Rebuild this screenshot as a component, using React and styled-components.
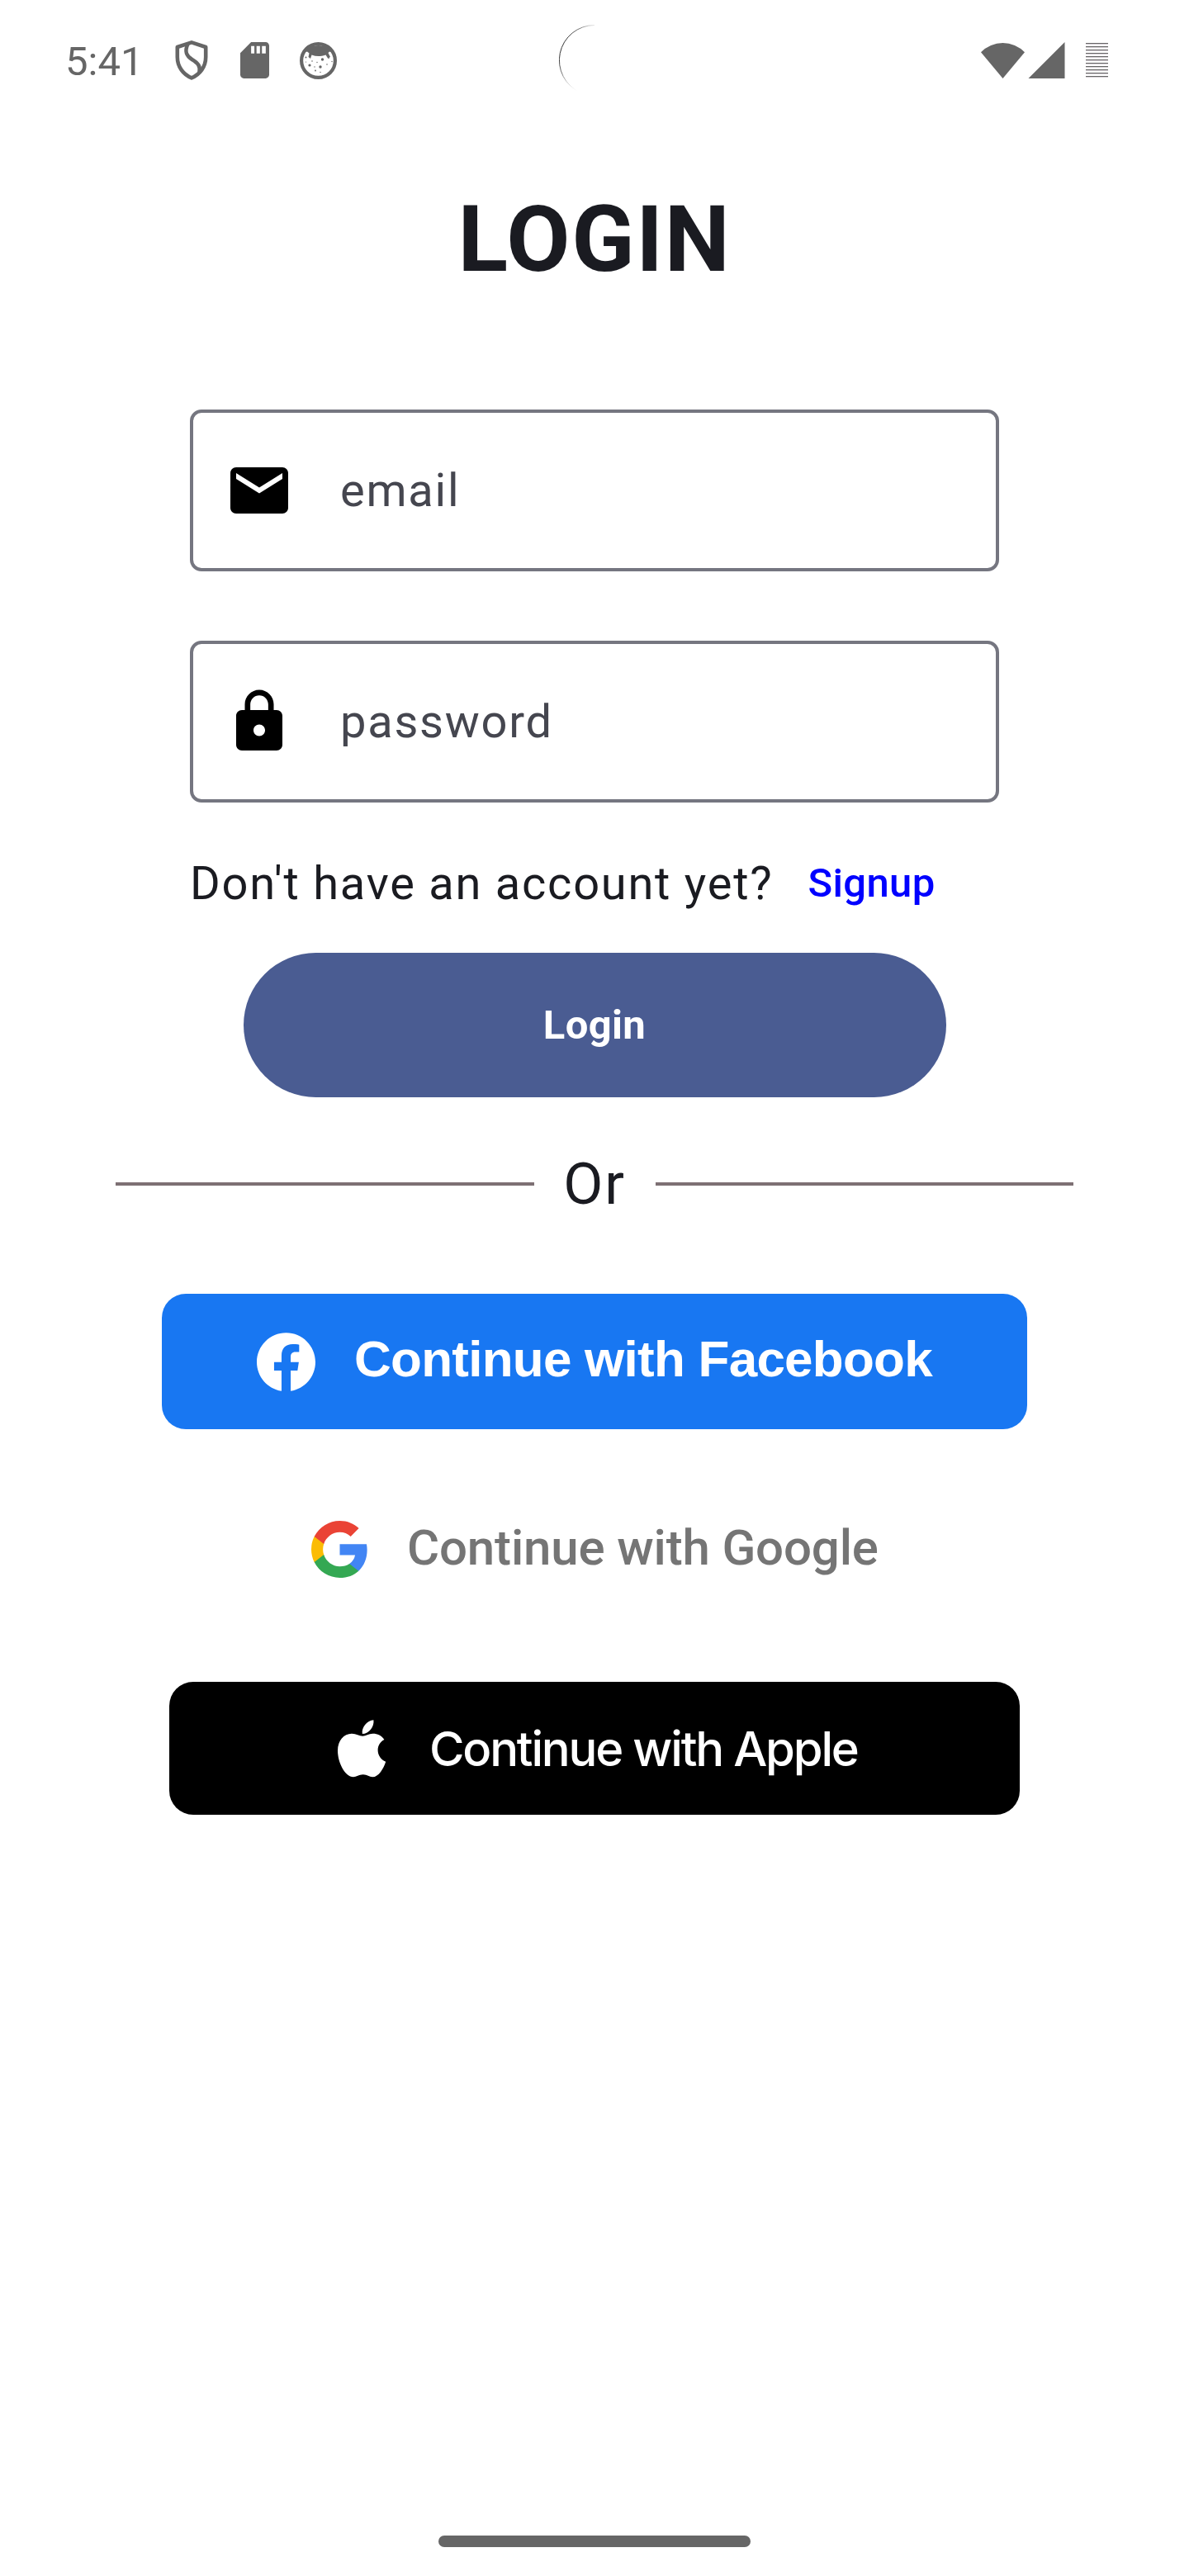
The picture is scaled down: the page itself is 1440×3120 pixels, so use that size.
import React from "react";
import styled, { createGlobalStyle } from "styled-components";

const GlobalStyle = createGlobalStyle`
  *, *::before, *::after { box-sizing: border-box; }
  body { margin: 0; background: #fff; }
  button { border: 0; padding: 0; margin: 0; }
`;

const Screen = styled.main`
  width: 1440px;
  height: 3120px;
  display: flex;
  flex-direction: column;
  align-items: center;
  background: #fff;
  color: #1a1b21;
  font-family: Roboto, "Noto Sans", sans-serif;
`;

const StatusBar = styled.header`
  width: 100%;
  height: 146px;
  display: grid;
  grid-template-columns: 1fr auto 1fr;
  align-items: center;
  color: #666;
`;

const StatusLeft = styled.div`
  display: flex;
  align-items: center;
  padding-left: 79px;
`;

const Clock = styled.time`
  width: 133px;
  padding-top: 4px;
  font-size: 49px;
  line-height: 58px;
`;

const StatusIcon = styled.svg`
  display: block;
  flex: none;
  margin-left: ${(p) => p.$gap || 0}px;
`;

const StatusRight = styled.div`
  display: flex;
  align-items: center;
  justify-content: flex-end;
  padding-right: 98px;
`;

const Battery = styled.div`
  width: 27px;
  height: 42px;
  margin-left: 25px;
  background: repeating-linear-gradient(
    to bottom,
    #666 0 1px,
    #d3cdd3 1px 2px,
    #fff 2px 4px
  );
`;

const Title = styled.h1`
  margin: 78px 0 0;
  font-size: 112px;
  line-height: 132px;
  font-weight: 700;
  letter-spacing: 1.75px;
`;

const Form = styled.form`
  width: 980px;
  margin-top: 140px;
  display: flex;
  flex-direction: column;
  align-items: center;
`;

const Field = styled.label`
  width: 100%;
  height: 196px;
  display: flex;
  align-items: center;
  gap: 56px;
  padding-left: 38px;
  margin-top: ${(p) => p.$top || 0}px;
  border: 4px solid #757680;
  border-radius: 14px;
  color: #45464f;
  font-size: 56px;
  letter-spacing: 1.75px;
`;

const FieldIcon = styled.svg`
  display: block;
  width: 84px;
  height: 84px;
  fill: #000;
`;

const Prompt = styled.div`
  width: 100%;
  height: 140px;
  margin: 28px 0 14px;
  display: flex;
  align-items: center;
  font-size: 56px;
  letter-spacing: 1.75px;
  white-space: nowrap;
`;

const SignupLink = styled.a`
  margin-left: 42px;
  padding-bottom: 1px;
  color: #00f;
  font-size: 49px;
  font-weight: 500;
  letter-spacing: 0.35px;
`;

const LoginButton = styled.button`
  width: 851px;
  height: 175px;
  border-radius: 88px;
  background: #4a5c92;
  color: #fff;
  font: 700 49px Roboto, sans-serif;
  letter-spacing: 0.35px;
`;

const OrRow = styled.div`
  width: 1160px;
  height: 84px;
  margin-top: 63px;
  display: flex;
  align-items: center;
  font-size: 70px;
  letter-spacing: 1.75px;
`;

const Rule = styled.span`
  flex: 1;
  height: 4px;
  background: #7d7074;
`;

const OrText = styled.span`
  width: 147px;
  text-align: center;
  line-height: 84px;
`;

const SocialButton = styled.button`
  width: ${(p) => p.$width}px;
  height: ${(p) => p.$height}px;
  margin-top: ${(p) => p.$top}px;
  padding-left: ${(p) => p.$inset}px;
  display: flex;
  align-items: center;
  gap: ${(p) => p.$gap}px;
  border-radius: 29px;
  background: ${(p) => p.$bg};
  color: ${(p) => p.$color};
  white-space: nowrap;
`;

const SocialIcon = styled.svg`
  display: block;
  flex: none;
`;

const SocialLabel = styled.span`
  font: ${(p) => p.$font};
  letter-spacing: ${(p) => p.$spacing}px;
  padding-bottom: ${(p) => p.$lift || 0}px;
`;

const NavHandle = styled.div`
  width: 378px;
  height: 14px;
  margin: auto 0 35px;
  border-radius: 7px;
  background: #666;
`;

const dots = [
  [7.5, 18.5, 1], [27.5, 21, 1.7], [35, 19, 0.9], [15, 23, 0.8], [12, 28, 1.6],
  [21, 24.5, 0.7], [33, 27, 0.8], [25, 30, 1.7], [18, 30, 0.7], [19, 34.5, 0.9],
  [25, 36.5, 0.7], [39, 23.5, 0.7], [7.5, 24, 0.6],
];

export default function App() {
  return (
    <>
      <GlobalStyle />
      <Screen>
        <StatusBar>
          <StatusLeft>
            <Clock>5:41</Clock>
            <StatusIcon width="40" height="48" viewBox="0 0 40 48" fill="none" stroke="#666" strokeWidth="4.6">
              <path d="M20 2.4 2.8 8V20C2.8 32 10 41.3 20 45.4 30 41.3 37.2 32 37.2 20V8Z" strokeLinejoin="round" />
              <path d="M15.5 4C11 14 14 19 20.5 23 28 27.5 31 31 29.5 39" />
            </StatusIcon>
            <StatusIcon $gap={39} width="35" height="44" viewBox="4 2 16 20" fill="#666" preserveAspectRatio="none">
              <path d="M18 2h-8L4 8v12c0 1.1.9 2 2 2h12c1.1 0 2-.9 2-2V4c0-1.1-.9-2-2-2zm-6.2 6.2H10V4.2h1.8zm3.1 0h-1.9V4.2h1.9zm3.2 0h-2.1V4.2h2.1z" />
            </StatusIcon>
            <StatusIcon $gap={37} width="45" height="45" viewBox="0 0 45 45">
              <circle cx="22.5" cy="22.5" r="20.4" fill="none" stroke="#666" strokeWidth="4.2" />
              <path d="M4 13C11 1 34 1 41 13L36 11.5 34.5 13 37 18 34 19.5 31.5 15.5C25 17.5 20 17.5 14.5 15.5L13 20 10.5 18 11.5 13.5 9 11.5Z" fill="#666" />
              {dots.map(([x, y, r]) => (
                <circle key={`${x}-${y}`} cx={x} cy={y} r={r} fill="#666" />
              ))}
            </StatusIcon>
          </StatusLeft>
          <StatusIcon width="86" height="86" viewBox="0 0 86 86" fill="none">
            <defs>
              <linearGradient id="lens" x1="0" y1="36" x2="36" y2="50" gradientUnits="userSpaceOnUse">
                <stop offset="0" stopColor="#333" />
                <stop offset="0.3" stopColor="#777" />
                <stop offset="1" stopColor="#fff" stopOpacity="0" />
              </linearGradient>
            </defs>
            <path d="M43 .5A42.5 42.5 0 0 0 26 82" stroke="url(#lens)" strokeWidth="1" />
          </StatusIcon>
          <StatusRight>
            <StatusIcon width="53" height="44" viewBox="0 0 53 44" fill="#666">
              <path d="M0 12.2A37 37 0 0 1 53 12.2L26.5 44Z" />
            </StatusIcon>
            <StatusIcon $gap={4} width="45" height="44" viewBox="0 0 45 44" fill="#666">
              <path d="M0.5 44 44.5 0V44Z" />
            </StatusIcon>
            <Battery />
          </StatusRight>
        </StatusBar>

        <Title>LOGIN</Title>

        <Form>
          <Field>
            <FieldIcon viewBox="0 0 24 24">
              <path d="M20 4H4c-1.1 0-1.99.9-1.99 2L2 18c0 1.1.9 2 2 2h16c1.1 0 2-.9 2-2V6c0-1.1-.9-2-2-2zm0 4-8 5-8-5V6l8 5 8-5v2z" />
            </FieldIcon>
            <span>email</span>
          </Field>
          <Field $top={84}>
            <FieldIcon viewBox="0 0 24 24">
              <path d="M18 8h-1V6c0-2.76-2.24-5-5-5S7 3.24 7 6v2H6c-1.1 0-2 .9-2 2v10c0 1.1.9 2 2 2h12c1.1 0 2-.9 2-2V10c0-1.1-.9-2-2-2zm-6 9c-1.1 0-2-.9-2-2s.9-2 2-2 2 .9 2 2-.9 2-2 2zm3.1-9H8.9V6c0-1.71 1.39-3.1 3.1-3.1 1.71 0 3.1 1.39 3.1 3.1v2z" />
            </FieldIcon>
            <span>password</span>
          </Field>
          <Prompt>
            <span>Don't have an account yet?</span>
            <SignupLink>Signup</SignupLink>
          </Prompt>
          <LoginButton type="button">Login</LoginButton>
        </Form>

        <OrRow>
          <Rule />
          <OrText>Or</OrText>
          <Rule />
        </OrRow>

        <SocialButton $width={1048} $height={164} $top={91} $inset={115} $gap={47} $bg="#1877f2" $color="#fff">
          <SocialIcon width="71" height="71" viewBox="0 0 24 24" fill="#fff">
            <path d="M24 12.073c0-6.627-5.373-12-12-12s-12 5.373-12 12c0 5.99 4.388 10.954 10.125 11.854v-8.385H7.078v-3.47h3.047V9.43c0-3.007 1.792-4.669 4.533-4.669 1.312 0 2.686.235 2.686.235v2.953H15.83c-1.491 0-1.956.925-1.956 1.874v2.25h3.328l-.532 3.47h-2.796v8.385C19.612 23.027 24 18.062 24 12.073z" />
          </SocialIcon>
          <SocialLabel $font={'700 62px "Liberation Sans", Arial, sans-serif'} $spacing={-0.75} $lift={8}>
            Continue with Facebook
          </SocialLabel>
        </SocialButton>

        <SocialButton $width={1030} $height={161} $top={65} $inset={172} $gap={47} $bg="#fff" $color="#757575">
          <SocialIcon width="69" height="69" viewBox="0 0 18 18">
            <path fill="#4285f4" d="M17.64 9.205c0-.639-.057-1.252-.164-1.841H9v3.481h4.844a4.14 4.14 0 0 1-1.796 2.716v2.259h2.908c1.702-1.567 2.684-3.875 2.684-6.615z" />
            <path fill="#34a853" d="M9 18c2.43 0 4.467-.806 5.956-2.18l-2.908-2.259c-.806.54-1.837.86-3.048.86-2.344 0-4.328-1.584-5.036-3.711H.957v2.332A8.997 8.997 0 0 0 9 18z" />
            <path fill="#fbbc05" d="M3.964 10.71A5.41 5.41 0 0 1 3.682 9c0-.593.102-1.17.282-1.71V4.958H.957A8.996 8.996 0 0 0 0 9c0 1.452.348 2.827.957 4.042l3.007-2.332z" />
            <path fill="#ea4335" d="M9 3.58c1.321 0 2.508.454 3.44 1.345l2.582-2.58C13.463.891 11.426 0 9 0A8.997 8.997 0 0 0 .957 4.958L3.964 7.29C4.672 5.163 6.656 3.58 9 3.58z" />
          </SocialIcon>
          <SocialLabel $font={"500 60px Roboto, sans-serif"} $spacing={-0.17} $lift={5}>
            Continue with Google
          </SocialLabel>
        </SocialButton>

        <SocialButton $width={1030} $height={161} $top={80} $inset={204} $gap={52} $bg="#000" $color="#fff">
          <SocialIcon width="59" height="70" viewBox="0 0 59 70" fill="#fff">
            <path d="M43.4 .2C44.5 8 38 17 29.8 17 28.5 9 35.5 1 43.4 .2Z" />
            <path d="M30.3 19.7C26 19.7 22.5 16.7 17 16.7 7.5 16.7 0 25 0 37.3 0 52 9 69.3 18.9 69.3 22.8 69.3 25.5 66.3 30.7 66.3 36 66.3 38 69.3 42.2 69.3 49.5 69.3 55.5 59 58.2 50.7 52.5 48.5 48.6 43 48.6 36.7 48.6 31 51.5 26.8 56.4 24 53 19 48.5 16.7 42.5 16.7 37.5 16.7 34 19.7 30.3 19.7Z" />
          </SocialIcon>
          <SocialLabel $font={"500 58px Inter, sans-serif"} $spacing={-2.2}>
            Continue with Apple
          </SocialLabel>
        </SocialButton>

        <NavHandle />
      </Screen>
    </>
  );
}
